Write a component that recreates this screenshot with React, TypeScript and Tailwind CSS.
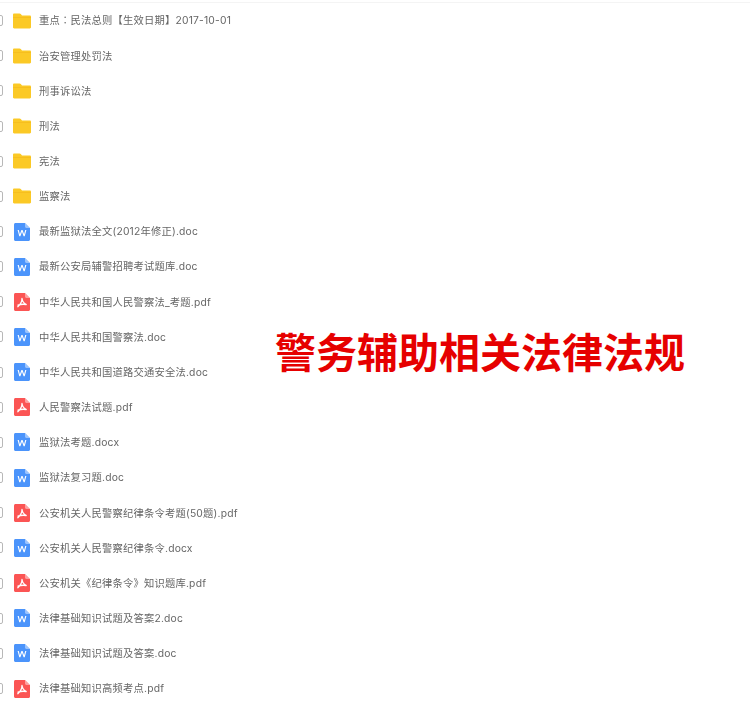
import React from "react";

const files = [
  { name: "重点：民法总则【生效日期】2017-10-01", type: "folder" },
  { name: "治安管理处罚法", type: "folder" },
  { name: "刑事诉讼法", type: "folder" },
  { name: "刑法", type: "folder" },
  { name: "宪法", type: "folder" },
  { name: "监察法", type: "folder" },
  { name: "最新监狱法全文(2012年修正).doc", type: "word" },
  { name: "最新公安局辅警招聘考试题库.doc", type: "word" },
  { name: "中华人民共和国人民警察法_考题.pdf", type: "pdf" },
  { name: "中华人民共和国警察法.doc", type: "word" },
  { name: "中华人民共和国道路交通安全法.doc", type: "word" },
  { name: "人民警察法试题.pdf", type: "pdf" },
  { name: "监狱法考题.docx", type: "word" },
  { name: "监狱法复习题.doc", type: "word" },
  { name: "公安机关人民警察纪律条令考题(50题).pdf", type: "pdf" },
  { name: "公安机关人民警察纪律条令.docx", type: "word" },
  { name: "公安机关《纪律条令》知识题库.pdf", type: "pdf" },
  { name: "法律基础知识试题及答案2.doc", type: "word" },
  { name: "法律基础知识试题及答案.doc", type: "word" },
  { name: "法律基础知识高频考点.pdf", type: "pdf" },
];

function FileIcon({ type }: { type: string }) {
  if (type === "folder") {
    return (
      <svg width="18" height="16" viewBox="0 0 18 16">
        <path d="M1.2 0.5h5.3c.6 0 1 .2 1.3.6l1.2 1.4h7.8c.7 0 1.2.5 1.2 1.2v10.6c0 .7-.5 1.2-1.2 1.2H1.2C.5 15.5 0 15 0 14.3V1.7C0 1 .5.5 1.2.5z" fill="#fbc926" />
        <rect x="0" y="4.2" width="18" height="0.6" fill="#f4b81c" />
      </svg>
    );
  }
  const color = type === "word" ? "#4b94fb" : "#fb5554";
  return (
    <svg width="16" height="18" viewBox="0 0 16 18">
      <path d="M1.5 0H11l5 5v11.5c0 .8-.7 1.5-1.5 1.5h-13C.7 18 0 17.3 0 16.5v-15C0 .7.7 0 1.5 0z" fill={color} />
      <path d="M11 0l5 5h-3.6c-.8 0-1.4-.6-1.4-1.4V0z" fill="#ffffff" fillOpacity="0.45" />
      {type === "word" ? (
        <path d="M3.6 7l1.7 6.2h1.1L8 8.8l1.6 4.4h1.1L12.4 7h-1.2l-1.1 4.2L8.6 7H7.4L5.9 11.2 4.8 7z" fill="#ffffff" />
      ) : (
        <path d="M8 5.5c.3 2.6 1.6 4.6 4.2 6M8 5.5c0 2.8-1.6 6-4.2 8.2M4 12.2c2.4-.9 5.2-1.2 8.2-.7" fill="none" stroke="#ffffff" strokeWidth="1.3" strokeLinecap="round" />
      )}
    </svg>
  );
}

export default function App() {
  return (
    <div className="relative w-[750px] h-[713px] overflow-hidden bg-white font-['Noto_Sans_CJK_SC','Noto_Sans',sans-serif]">
      <div className="border-t border-[#f4f4f4] mt-[2px] blur-[0.3px]">
        {files.map((f, i) => (
          <div key={i} className="flex items-center h-[35.16px] -ml-[8px]">
            <div className="w-[11px] h-[11px] rounded-[2px] border border-[#b8b8b8] bg-white shrink-0" />
            <div className="w-[18px] ml-[10px] flex justify-center shrink-0">
              <FileIcon type={f.type} />
            </div>
            {/* first row has the centred colon and brackets of the TC forms */}
            <span
              className={
                i === 0
                  ? "ml-[8px] pt-px text-[10.3px] tracking-[0.2px] text-[#666666] font-['Inter','Noto_Sans_CJK_TC',sans-serif] whitespace-nowrap"
                  : "ml-[8px] pt-px text-[10.3px] tracking-[0.2px] text-[#666666] font-['Inter','Noto_Sans_CJK_SC',sans-serif] whitespace-nowrap"
              }
            >
              {f.name}
            </span>
          </div>
        ))}
      </div>
      {/* big red title over the list */}
      <div className="absolute left-[275px] top-[322px] text-[41px] leading-[56px] font-bold text-[#e60000] whitespace-nowrap">
        警务辅助相关法律法规
      </div>
    </div>
  );
}
